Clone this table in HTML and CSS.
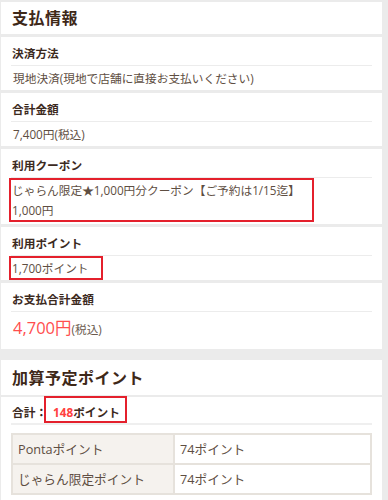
FILE: index.html
```html
<!DOCTYPE html>
<html lang="ja">
<head>
<meta charset="utf-8">
<link rel="stylesheet" href="styles.css">
</head>
<body>
<div class="page">
  <section class="section">
    <div class="card heading-card"><h2 class="heading">支払情報</h2></div>
    <div class="card">
      <div class="label">決済方法</div>
      <div class="value">現地決済(現地で店舗に直接お支払いください)</div>
    </div>
    <div class="card">
      <div class="label">合計金額</div>
      <div class="value">7,400円(税込)</div>
    </div>
    <div class="card card-coupon">
      <div class="label">利用クーポン</div>
      <div class="value marked marked-coupon">じゃらん限定★1,000円分クーポン【ご予約は1/15迄】<br>1,000円</div>
    </div>
    <div class="card card-point">
      <div class="label">利用ポイント</div>
      <div class="value marked marked-point">1,700ポイント</div>
    </div>
    <div class="card card-total">
      <div class="label">お支払合計金額</div>
      <div class="value total"><span class="price">4,700円</span><span class="tax">(税込)</span></div>
    </div>
  </section>
  <section class="section section-2">
    <div class="card heading-card heading-card-2"><h2 class="heading">加算予定ポイント</h2></div>
    <div class="card card-earn">
      <div class="label earn-label">合計：<span class="earn"><span class="red">148</span>ポイント</span></div>
      <table class="points">
        <tr><th>Pontaポイント</th><td>74ポイント</td></tr>
        <tr><th>じゃらん限定ポイント</th><td>74ポイント</td></tr>
      </table>
    </div>
  </section>
</div>
</body>
</html>
```
FILE: styles.css
```css
html, body {
  margin: 0;
  padding: 0;
  background: #ebebeb;
}
body {
  font-family: "Open Sans", "Noto Sans CJK JP", sans-serif;
  color: #5e4e42;
  font-size: 11.7px;
  line-height: 20px;
  height: 500px;
  overflow: hidden;
}
.page {
  width: 381px;
  margin-left: 1px;
  padding-top: 2px;
}
.section {
  display: flex;
  flex-direction: column;
  gap: 3px;
}
.section-2 {
  margin-top: 11px;
  gap: 2px;
}
.card {
  background: #fff;
  padding: 0 10px;
  display: flex;
  flex-direction: column;
}
.heading-card {
  height: 32px;
  justify-content: center;
}
.heading-card-2 {
  height: 35px;
}
.heading {
  margin: 0 0 0 1px;
  font-size: 16px;
  line-height: 20px;
  font-weight: 700;
  color: #3e2818;
  letter-spacing: 0.5px;
}
.label {
  padding: 6px 0 2px 1px;
  line-height: 20px;
  font-weight: 700;
  color: #3c2a1e;
  border-bottom: 1px solid #ececec;
}
.value {
  line-height: 20px;
  border: 2px solid transparent;
}
.marked {
  align-self: flex-start;
  border-color: #e4202c;
  margin-left: -2px;
  padding-left: 1px;
}
.marked-coupon {
  padding-right: 12px;
}
.marked-point {
  padding-right: 12px;
}
.card-coupon {
  padding-bottom: 2px;
}
.total {
  line-height: 24px;
  padding: 2px 0 6px;
}
.price {
  color: #ff4e4e;
  font-size: 16.5px;
}
.tax {
  color: #6a5a4e;
  font-size: 11.7px;
}
.card-earn {
  padding-bottom: 8px;
}
.earn-label {
  padding: 5px 0 1px 1px;
  border-bottom: 2px solid #efefef;
}
.earn {
  position: relative;
  margin-left: 6px;
}
.earn::after {
  content: "";
  position: absolute;
  left: -9px;
  right: -7px;
  top: -8px;
  bottom: -3px;
  border: 2px solid #e4202c;
}
.red {
  color: #ff4040;
}
.points {
  margin-top: 8px;
  width: 100%;
  border-collapse: collapse;
  font-size: 12.7px;
}
.points th, .points td {
  border: 2px solid #e6e2dc;
  height: 28px;
  padding: 0 5px;
  text-align: left;
  font-weight: 400;
  color: #5e4e42;
}
.points th {
  background: #f5f2ee;
  width: 150px;
}
```
